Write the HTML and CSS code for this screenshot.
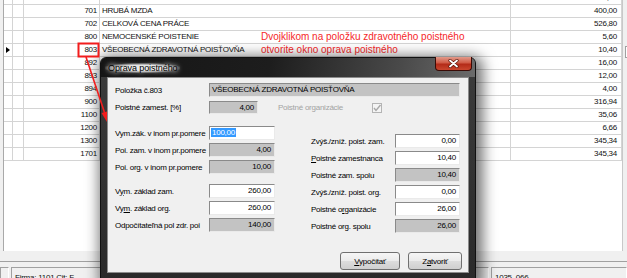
FILE: index.html
```html
<!DOCTYPE html>
<html lang="sk">
<head>
    <meta charset="UTF-8">
    <title>Oprava poistného</title>
    <link rel="stylesheet" href="styles.css">
</head>
<body>
<div class="screen">
    <div class="main">
        <div class="sheet">
            <div class="row"><span></span><span></span><span class="num">700</span><span class="name">SLEDOVANÝ PRÍJEM ZAMESTNANCA</span><span class="val">100,00</span></div>
            <div class="row"><span></span><span></span><span class="num">701</span><span class="name">HRUBÁ MZDA</span><span class="val">400,00</span></div>
            <div class="row"><span></span><span></span><span class="num">702</span><span class="name">CELKOVÁ CENA PRÁCE</span><span class="val">526,80</span></div>
            <div class="row"><span></span><span></span><span class="num">800</span><span class="name">NEMOCENSKÉ POISTENIE</span><span class="val">5,60</span></div>
            <div class="row current"><span class="ind"></span><span></span><span class="num">803</span><span class="name">VŠEOBECNÁ ZDRAVOTNÁ POISŤOVŇA</span><span class="val">10,40</span></div>
            <div class="row"><span></span><span></span><span class="num">892</span><span class="name">STAROBNÉ POISTENIE</span><span class="val">16,00</span></div>
            <div class="row"><span></span><span></span><span class="num">893</span><span class="name">INVALIDNÉ POISTENIE</span><span class="val">12,00</span></div>
            <div class="row"><span></span><span></span><span class="num">894</span><span class="name">POISTENIE V NEZAMESTNANOSTI</span><span class="val">4,00</span></div>
            <div class="row"><span></span><span></span><span class="num">900</span><span class="name">ZÁKLAD DANE</span><span class="val">316,94</span></div>
            <div class="row"><span></span><span></span><span class="num">1100</span><span class="name">DAŇ</span><span class="val">35,06</span></div>
            <div class="row"><span></span><span></span><span class="num">1200</span><span class="name">DAŇOVÝ BONUS</span><span class="val">6,66</span></div>
            <div class="row"><span></span><span></span><span class="num">1300</span><span class="name">ČISTÁ MZDA</span><span class="val">345,34</span></div>
            <div class="row"><span></span><span></span><span class="num">1701</span><span class="name">K VÝPLATE</span><span class="val">345,34</span></div>
        </div>
        <div class="side"><span class="side-box"></span></div>
    </div>
    <div class="hbar"></div>
    <div class="status">
        <span class="cell c1"></span>
        <span class="cell c2">Firma: 1101 Cit: F</span>
        <span class="cell c3">1035, 066</span>
    </div>

    <div class="note">Dvojklikom na položku zdravotného poistného<br>otvorite okno oprava poistného</div>

    <div class="dialog">
        <div class="titlebar">
            <span class="title">Oprava poistného</span>
            <span class="close">
                <svg width="11" height="9" viewBox="0 0 11 9"><path d="M2 1.5 L9 7.5 M9 1.5 L2 7.5" stroke="#5a1208" stroke-width="3.2" stroke-linecap="round"/><path d="M2 1.5 L9 7.5 M9 1.5 L2 7.5" stroke="#fff" stroke-width="1.8" stroke-linecap="round"/></svg>
            </span>
        </div>
        <div class="client">
            <div class="line">
                <span class="lbl">Položka č.803</span>
                <span class="fld ro wide">VŠEOBECNÁ ZDRAVOTNÁ POISŤOVŇA</span>
            </div>
            <div class="line second">
                <span class="lbl">Poistné zamest. [%]</span>
                <span class="fld ro short num-r">4,00</span>
                <span class="lbl disabled">Poistné organizácie</span>
                <span class="check">
                    <svg width="10" height="10" viewBox="0 0 10 10"><path d="M2 5 L4 7.5 L8.5 2" fill="none" stroke="#a8a8a8" stroke-width="1.4"/></svg>
                </span>
            </div>
            <div class="cols">
                <div class="col left">
                    <div class="frow"><span class="lbl">Vym.zák. v inom pr.pomere</span><span class="fld edit"><span class="sel">100,00</span></span></div>
                    <div class="frow"><span class="lbl">Poi. zam. v inom pr.pomere</span><span class="fld ro num-r">4,00</span></div>
                    <div class="frow"><span class="lbl">Poi. org. v inom pr.pomere</span><span class="fld ro num-r">10,00</span></div>
                    <div class="frow gap"><span class="lbl">V<u>y</u>m. základ zam.</span><span class="fld edit num-r">260,00</span></div>
                    <div class="frow"><span class="lbl">Vy<u>m</u>. základ org.</span><span class="fld edit num-r">260,00</span></div>
                    <div class="frow"><span class="lbl">Odpočítateľná pol zdr. poi</span><span class="fld ro num-r">140,00</span></div>
                </div>
                <div class="col right">
                    <div class="frow"><span class="lbl">Zvýš./zníž. poist. zam.</span><span class="fld edit num-r">0,00</span></div>
                    <div class="frow"><span class="lbl"><u>P</u>oistné zamestnanca</span><span class="fld edit num-r">10,40</span></div>
                    <div class="frow"><span class="lbl">Poistné zam. spolu</span><span class="fld ro num-r">10,40</span></div>
                    <div class="frow"><span class="lbl">Zvýš./zníž. poist. org.</span><span class="fld edit num-r">0,00</span></div>
                    <div class="frow"><span class="lbl">Poistné o<u>r</u>ganizácie</span><span class="fld edit num-r">26,00</span></div>
                    <div class="frow"><span class="lbl">Poistné org. spolu</span><span class="fld ro num-r">26,00</span></div>
                </div>
            </div>
            <div class="buttons">
                <button class="btn b1"><u>V</u>ypočítať</button>
                <button class="btn b2">Z<u>a</u>tvoriť</button>
            </div>
        </div>
    </div>

    <svg class="marks" width="627" height="278" viewBox="0 0 627 278">
        <rect x="78.5" y="43.5" width="20" height="13" fill="none" stroke="#f21d1d" stroke-width="2"/>
        <path d="M86 57 L105 114" stroke="#f21d1d" stroke-width="1.6"/>
        <path d="M107 122 L101.5 113 L107 111.5 Z" fill="#f21d1d"/>
    </svg>
</div>
</body>
</html>
```

FILE: styles.css
```css
body {
    margin: 0;
    font-family: "Liberation Sans", Arial, sans-serif;
    font-size: 8px;
    letter-spacing: -0.25px;
    color: #111;
}
.screen {
    position: relative;
    width: 627px;
    height: 278px;
    overflow: hidden;
    background: #f0f0f0;
}
.main {
    display: flex;
    margin-top: -8px;
    height: 259px;
}
.sheet {
    margin-left: 3px;
    width: 620px;
    background: #fff;
    border-left: 1px solid #a9a9a9;
    border-right: 1px solid #c8c8c8;
    box-sizing: border-box;
}
.row {
    display: grid;
    grid-template-columns: 9px 11px 76px 411px 111px;
    height: 13px;
}
.row span {
    border-right: 1px solid #d4d4d4;
    border-bottom: 1px solid #d4d4d4;
    line-height: 12px;
    white-space: nowrap;
    overflow: hidden;
}
.row .num {
    text-align: right;
    padding-right: 2px;
}
.row .name {
    padding-left: 2px;
}
.row .val {
    text-align: right;
    padding-right: 4px;
}
.row .ind {
    position: relative;
}
.row .ind::after {
    content: "";
    position: absolute;
    left: 2px;
    top: 3px;
    border-left: 4px solid #000;
    border-top: 3.5px solid transparent;
    border-bottom: 3.5px solid transparent;
}
.side {
    flex: 1;
    position: relative;
}
.side-box {
    position: absolute;
    left: 2px;
    top: 54px;
    width: 6px;
    height: 10px;
    background: #fff;
    border: 1px solid #a0a0a0;
}
.hbar {
    height: 10px;
    border-bottom: 1px solid #a0a0a0;
}
.status {
    display: flex;
    gap: 2px;
    margin-top: 5px;
}
.status .cell {
    height: 14px;
    border: 1px solid #a0a0a0;
    border-right-color: #fff;
    border-bottom-color: #fff;
    padding: 5px 0 0 3px;
    box-sizing: border-box;
    white-space: nowrap;
}
.status .c1 { width: 9px; }
.status .c2 { width: 478px; }
.status .c3 { flex: 1; }

.note {
    position: absolute;
    left: 261px;
    top: 30px;
    font-size: 10px;
    letter-spacing: 0;
    line-height: 13px;
    color: #f5282a;
}

.dialog {
    position: absolute;
    left: 100px;
    top: 57px;
    width: 376px;
    height: 224px;
    background: linear-gradient(180deg, #3c3c3c, #2a2a2a);
    border: 1px solid #111;
    border-radius: 6px 6px 0 0;
    box-sizing: border-box;
    box-shadow: 3px 3px 14px 4px rgba(0, 0, 0, 0.55);
}
.titlebar {
    position: relative;
    height: 19px;
    border-radius: 5px 5px 0 0;
    background: linear-gradient(100deg, #151515 0%, #1d1d1d 45%, #4a4a4a 80%, #6b6b6b 100%);
}
.title {
    position: absolute;
    left: 7px;
    top: 5px;
    padding: 0 3px;
    margin-left: -3px;
    font-size: 9px;
    letter-spacing: -0.1px;
    color: #000;
    background: radial-gradient(ellipse at center, rgba(235, 235, 235, 0.95) 40%, rgba(200, 200, 200, 0) 75%);
    text-shadow: 0 0 4px #fff, 0 0 6px #fff;
}
.close {
    position: absolute;
    right: 3px;
    top: -1px;
    width: 37px;
    height: 14px;
    box-sizing: border-box;
    border: 1px solid #3a0b06;
    border-top: none;
    border-radius: 0 0 4px 4px;
    background: linear-gradient(180deg, #e29a8a 0%, #cf5a45 45%, #b32b18 55%, #c9462e 100%);
    display: flex;
    align-items: center;
    justify-content: center;
}
.client {
    margin: 0 6px;
    height: 196px;
    background: #f0f0f0;
    border: 1px solid #8c8c8c;
    box-sizing: border-box;
    padding: 5px 0 0 7px;
    color: #000;
}
.line {
    display: flex;
    align-items: center;
}
.line.second {
    margin-top: 4px;
}
.lbl {
    white-space: nowrap;
}
.line > .lbl:first-child {
    width: 94px;
}
.fld {
    box-sizing: border-box;
    height: 14px;
    line-height: 12px;
    padding: 0 3px;
    white-space: nowrap;
    border: 1px solid;
    border-color: #8a8a8a #eaeaea #eaeaea #8a8a8a;
}
.fld.ro {
    background: #c3c3c3;
}
.fld.edit {
    background: #fff;
}
.num-r {
    text-align: right;
}
.fld.wide {
    width: 251px;
    padding-left: 2px;
}
.fld.short {
    width: 49px;
    height: 13px;
}
.lbl.disabled {
    margin-left: 20px;
    width: 94px;
    color: #a3a3a3;
}
.check {
    width: 10px;
    height: 10px;
    box-sizing: border-box;
    border: 1px solid #b4b4b4;
    background: #f4f4f4;
    display: flex;
}
.check svg {
    margin: -1px;
}
.sel {
    background: #3399ff;
    color: #fff;
    padding: 0 1px;
    margin-left: -2px;
}
.cols {
    display: flex;
    gap: 36px;
    margin-top: 12px;
}
.col {
    display: flex;
    flex-direction: column;
    gap: 3px;
}
.col.right {
    margin-top: 8px;
}
.frow {
    display: flex;
    align-items: center;
}
.frow.gap {
    margin-top: 7px;
}
.col.left .lbl {
    width: 94px;
}
.col.left .fld {
    width: 66px;
}
.col.right .lbl {
    width: 84px;
}
.col.right .fld {
    width: 65px;
}
.buttons {
    display: flex;
    justify-content: flex-end;
    gap: 8px;
    margin-top: 19px;
    padding-right: 6px;
}
.btn {
    height: 18px;
    font-family: inherit;
    font-size: 8px;
    letter-spacing: -0.25px;
    color: #000;
    border: 1px solid #707070;
    border-radius: 3px;
    background: linear-gradient(180deg, #f6f6f6 0%, #ebebeb 50%, #dddddd 51%, #cfcfcf 100%);
    padding: 0;
}
.btn.b1 { width: 60px; }
.btn.b2 { width: 54px; }

.marks {
    position: absolute;
    left: 0;
    top: 0;
    pointer-events: none;
}
```
